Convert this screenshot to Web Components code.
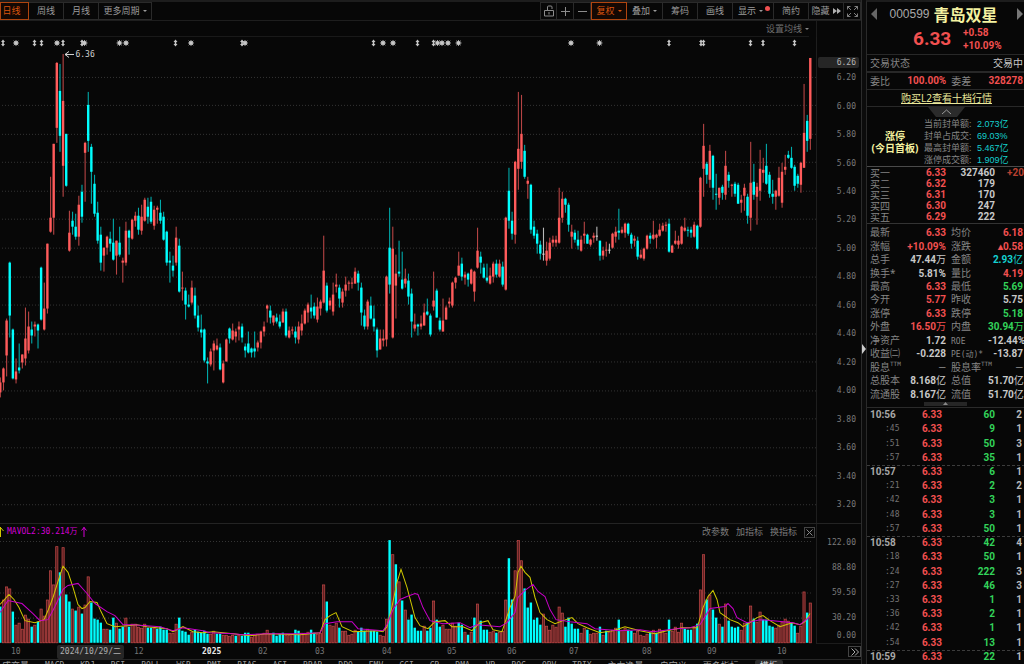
<!DOCTYPE html>
<html lang="zh-CN">
<head>
<meta charset="utf-8">
<title>青岛双星 000599</title>
<style>
body{margin:0;background:#070707;color:#8a8a8a;font:9px/12px "Noto Sans","Noto Sans CJK SC",sans-serif;overflow:hidden}
</style>
</head>
<body>
<stock-terminal></stock-terminal>
<script>
const BASE = `*{box-sizing:border-box}button{font:inherit;color:inherit;background:none;border:0;margin:0;padding:0;white-space:nowrap}
.mono{font:8px/12px "DejaVu Sans Mono","Noto Sans CJK SC",monospace}`;
function define(tag, css, html){
  customElements.define(tag, class extends HTMLElement{
    constructor(){
      super();
      this.attachShadow({mode:'open'}).innerHTML = `<style>${BASE}${css}</style>${typeof html === 'function' ? html() : html}`;
    }
  });
}

/* Daily candles: direction (r up, c down, w flat), high, body top, body bottom, low, volume (negative: cyan bar) */
const CANDLES = `r378,383,393,398,-36 r368,369,383,391,43 r319,321,356,377,56 c262,263,316,338,54 c329,330,379,380,-31 r359,372,380,384,18 c344,368,371,374,20 r355,355,363,369,14 r308,339,359,366,28 r312,327,351,354,24 c322,330,336,344,-16 r322,325,327,337,18 c324,325,331,349,-21 c267,268,320,321,34 r283,309,330,331,27 r244,244,309,314,43
r177,218,232,233,72 r144,144,218,235,58 r62,63,128,143,96 c64,91,136,152,-70 r54,101,166,197,95 c134,134,186,187,-48 r211,233,251,252,-41 c212,221,227,235,34 c214,227,237,240,-32 r196,205,237,246,36 c185,192,217,223,-29 r142,143,153,202,38 c92,105,141,152,66 c144,147,172,204,-40 c175,184,214,217,-24 c202,213,241,244,-23 c227,235,263,271,-20 r248,248,256,272,14 r236,237,248,255,14 c232,239,244,252,-13 c219,243,260,261,-25 r241,241,256,275,20 c227,243,255,257,-14 r258,261,263,283,-16 r222,231,263,266,25 c230,231,238,255,-16 r219,220,239,240,19 r212,216,221,227,19 c208,216,230,235,16 r205,217,231,235,15 r198,200,221,222,19
c198,207,217,224,-15 c197,202,222,224,-15 r206,210,226,230,15 r206,208,210,224,-14 c200,213,221,224,-16 c212,217,240,241,-13 c231,232,263,266,-13 c252,261,263,283,10 c256,266,271,277,10 r227,238,263,266,19 c239,246,292,293,-25 r272,288,289,301,-12 c288,291,305,320,-11 c295,305,307,308,-8 r281,288,303,305,11 c288,296,316,319,-13 c306,316,328,332,-11 c315,330,333,338,-10 c329,330,361,363,-12 c358,362,364,384,-9 r349,352,365,367,9 r341,344,351,371,12 r339,346,350,351,-9 c344,348,370,371,-9 r361,364,383,384,8 r339,340,362,362,8 c328,329,339,344,7 r324,331,340,341,8 r329,332,337,343,-7 r322,327,330,341,8 c324,327,338,343,-7 c344,347,351,358,-10 c332,344,353,354,-10 c348,349,353,358,6 c332,349,352,358,8 r341,343,348,352,9 r331,332,343,349,9 r322,327,332,337,10
r305,306,309,323,13 c306,311,318,324,9 r316,316,323,326,-10 c314,318,322,324,-7 c315,322,327,329,-9 r309,312,323,323,-10 c309,312,336,338,8 r327,331,338,339,8 r327,330,331,335,9 c327,332,338,344,-13 r322,327,340,344,-12 r315,324,331,336,10 r309,311,324,325,10 r303,305,313,323,11 c295,308,312,319,-13 c303,307,316,319,-10 r298,307,320,323,9 r300,302,309,316,10 r236,271,303,304,58 c283,286,311,313,-41 r298,301,306,310,18 r283,295,312,316,17 r274,285,287,293,20 c285,288,299,308,-15 r289,292,303,308,12 r277,285,291,297,12 r281,283,284,291,8 r278,283,284,289,9 r268,272,284,284,13 c271,274,283,291,-11 c283,288,313,326,-15 c310,316,327,330,-12 r300,302,327,330,14 c297,306,319,320,-12 c306,319,327,332,-12 c328,330,351,358,-11 r330,339,350,350,8 r330,339,341,347,7 r276,277,340,347,24
c208,248,285,294,-102 r227,249,338,339,88 r255,274,286,319,-78 c241,272,274,277,61 c252,280,289,290,-42 r269,279,284,288,33 c274,281,297,305,-23 c289,294,322,338,-28 r314,325,329,332,-15 c324,325,327,336,-12 r316,324,327,330,-12 r304,313,326,326,17 c299,312,315,316,-12 c314,316,335,337,-15 r272,301,307,311,42 c289,291,318,318,-23 c318,321,330,332,-16 r299,321,332,332,18 r306,308,320,320,14 r298,302,304,308,14 r282,283,306,308,20 r277,278,283,289,17 r252,266,276,276,-20 c258,264,277,281,-18 r272,275,278,285,11 c273,274,280,287,-8 r269,270,284,285,11 r271,272,292,302,-25 r228,251,268,269,39 c252,257,263,274,-22 c264,268,278,279,-13 c264,278,281,283,-13 r268,276,284,285,11 r262,264,277,283,12 c260,264,275,278,-10 r260,264,277,278,11 c262,267,285,287,12 r217,218,290,291,43
c168,191,221,229,-84 c212,221,234,240,-43 r161,162,235,244,72 r92,149,169,190,102 r95,134,162,169,82 c145,151,177,179,-54 r177,181,184,199,-35 c184,185,230,234,-40 c221,227,236,239,-23 c230,234,244,254,-25 c241,245,254,260,-18 w228,254,255,261,29 r242,251,261,266,17 r238,243,259,261,13 r236,240,243,247,18 r236,240,243,247,16 r188,218,243,244,36 r192,199,218,223,30 c198,199,205,213,-16 c203,205,225,232,-25 r225,232,237,249,-19 c230,233,240,243,-14 c231,240,246,250,-14 r236,240,251,252,10 r222,234,236,244,15 c234,235,244,244,-13 r239,240,245,247,9 r233,236,238,243,10 w227,236,237,241,10 c241,241,256,261,-16 r247,251,256,260,8 r242,250,251,257,-12 w244,250,251,254,11 r233,234,248,249,13 r227,232,237,243,15 c209,231,233,240,-23 r227,230,233,234,13 r223,224,233,238,15
c223,224,234,236,-13 c233,235,244,249,-12 r236,239,241,247,10 c237,241,257,260,12 r250,255,258,259,8 r248,249,259,261,7 r235,236,249,250,9 c233,236,239,244,-10 r221,235,239,240,13 r234,235,238,249,-10 r224,230,236,237,14 r223,226,231,232,12 r222,225,226,232,10 c219,224,252,253,-23 r245,246,253,253,12 r231,241,244,245,16 r236,241,245,249,11 r226,227,244,245,20 r218,228,231,232,-14 c227,230,231,237,-13 c227,230,233,238,-13 r222,225,237,238,16 c225,226,249,250,-19 r177,178,227,228,53 r124,146,169,197,88 c162,164,175,184,-43 r145,151,180,188,48 c155,156,188,200,-33 c174,194,195,210,-25 r188,188,198,205,19 c185,187,193,200,-16 r151,166,195,200,39 c172,175,181,188,-22 r184,185,186,197,-16 c182,184,194,197,-15 c183,185,204,204,-16
r195,200,203,213,13 r184,188,196,211,20 c194,197,216,224,-20 r142,183,218,231,37 c164,182,195,200,-24 r183,187,197,225,21 r150,169,191,201,31 r158,170,173,183,-23 c144,166,184,185,-23 c172,175,194,198,-17 c180,194,197,204,-16 r190,191,197,210,15 r167,178,196,197,18 r163,172,203,208,21 r155,167,170,175,24 c151,155,158,159,22 c147,158,168,169,-20 c165,167,186,191,-17 c174,176,184,188,10 r162,163,185,193,17 r84,133,168,168,51 c115,121,141,152,-30 r58,58,139,150,40`
  .trim().split(/\s+/).map(s => [s[0], ...s.slice(1).split(',').map(Number)]);
const barX = i => 0.3 + i * 810 / (CANDLES.length - 1);
const r2 = n => Math.round(n * 100) / 100;
const dotted = (ys, x1, x2) => ys.map(y => `<line x1="${x1}" x2="${x2}" y1="${y}.5" y2="${y}.5" stroke="#343434" stroke-dasharray="1 2"/>`).join('');

function candleSvg(){
  const body = {r:'#ff5b5b', c:'#00ffff', w:'#d8d8d8'}, wick = {r:'#b64444', c:'#00a9a9', w:'#b8b8b8'};
  let s = dotted([77,105,134,162,191,219,248,277,305,334,362,391,419,448,476,505], 2, 817);
  CANDLES.forEach(([d, hi, top, bot, lo], i) => {
    const x = barX(i);
    s += `<rect x="${r2(x-.5)}" y="${hi}" width="1.1" height="${Math.max(1,lo-hi)}" fill="${wick[d]}"/>`;
    s += `<rect x="${r2(x-1.2)}" y="${top}" width="2.4" height="${Math.max(1,bot-top)}" fill="${body[d]}"/>`;
  });
  const star = x => `<g transform="translate(${x} 43)"><circle r="2"/><path d="M-3 0H3M0-3V3M-2.3-2.3L2.3 2.3M2.3-2.3L-2.3 2.3" stroke="#c8c8c8" stroke-width=".8"/></g>`;
  const mark = x => `<path d="M${x} 39.5l2 2.5h-1.2v2h1.2l-2 2.5-2-2.5h1.2v-2h-1.2z"/>`;
  s += `<g fill="#c8c8c8">${[3,34.5,41.5,63,82,175.5,242,373.5,417.5,433.5,669,701,703.5,750.5,763,794.5].map(mark).join('')}${[16,57,84.5,119.5,126,191,245,383,393,437.5,442,448,458.5,571,599.5].map(star).join('')}</g>`;
  s += '<path d="M74 54.5H65M69 51.5L65 54.5L69 57.5" fill="none" stroke="#d8d8d8"/>';
  return s;
}
function volumeSvg(){
  let s = dotted([542,568,593,618], 0, 813);
  CANDLES.forEach((c, i) => {
    const v = c[5], x = barX(i), h = Math.abs(v);
    s += v < 0 ? `<rect x="${r2(x-1.2)}" y="${643-h}" width="2.4" height="${h}" fill="#00ffff"/>`
      : `<rect x="${r2(x-1.1)}" y="${643.5-h}" width="2.2" height="${h-.5}" fill="#5c2020" stroke="#c44848" stroke-width=".7"/>`;
  });
  const line = (c, p) => `<polyline fill="none" stroke="${c}" points="${p}"/>`;
  s += line('#d0c800','0,605 9,595 14,600 19,608 25,621 35,623 44,620 48,611 53,598 58,582 63,567 68,573 73,588 78,605 82,609 85,608 90,602 97,603 101,612 107,624 115,627 127,626 137,625 147,627 167,629 173,632 183,627 193,632 203,633 213,632 233,634 250,636 267,634 300,635 320,633 325,620 330,616 336,613 342,627 353,632 377,631 383,632 387,627 392,607 397,583 401,570 407,588 415,618 420,626 428,629 435,622 445,621 452,627 463,627 472,631 480,623 488,621 493,630 502,632 505,623 510,608 515,597 518,573 521,567 525,573 530,578 535,598 540,613 547,620 555,624 563,621 572,618 578,624 587,628 600,633 613,631 625,627 640,631 655,634 667,631 682,628 697,628 699,622 703,608 708,597 713,591 717,600 720,613 730,620 738,623 743,627 750,623 757,618 763,616 770,621 780,627 792,623 800,625 805,622 810,614');
  s += line('#c800c8','0,613 8,601 22,604 33,614 40,621 48,620 55,607 63,590 68,586 78,584 87,594 95,604 107,612 115,616 123,625 133,625 160,627 173,631 183,628 203,631 210,633 233,634 243,635 267,634 300,634 320,633 325,624 337,622 352,622 358,629 383,631 387,625 393,610 400,600 407,597 415,594 418,595 423,608 430,621 443,624 460,623 470,628 477,625 500,627 507,623 515,613 518,598 525,591 533,585 538,592 545,597 550,610 556,620 570,622 587,624 595,629 620,631 640,630 653,632 677,629 690,628 700,625 705,617 710,609 725,607 728,604 733,609 737,618 747,623 760,620 773,621 793,623 800,625 810,617');
  return s;
}

define('stock-terminal', `:host{display:flex;height:100vh;min-height:600px;background:#070707}
main{flex:1;min-width:0;display:flex;flex-direction:column}
.split{width:5px;background:#0c0c0c;border-left:1px solid #2c2c2c;display:flex;flex-direction:column;align-items:center;justify-content:center;padding-top:34px;color:#aaa}
quote-panel{flex:0 0 158px}`,
`<main><top-bar></top-bar><average-bar></average-bar><price-chart></price-chart><volume-chart></volume-chart><date-axis></date-axis><indicator-tabs></indicator-tabs></main>
<div class="split"><svg width="4" height="12"><path d="M0 1L4 6L0 11z" fill="#ccc"/></svg></div><quote-panel></quote-panel>`);

define('top-bar', `:host{display:flex;justify-content:space-between;height:21px;border-top:2px solid #1d1d1d;border-bottom:1px solid #1e1e1e}
div{display:flex}
button{height:18px;border:1px solid #2a2a2a;border-left-width:0;display:flex;align-items:center;justify-content:center;gap:3px;color:#9a9a9a;position:relative}
.on{border:1px solid #b0450f;color:#d9540e;background:#140803}
.first{padding-right:6px}
.w17{width:17px}.w29{width:29px}.w35{width:35px}.w36{width:36px}.w41{width:41px}.w53{width:53px}
.menu{justify-content:flex-start;padding-left:5px}
.lock{border-left-width:1px}
i{border:2px solid transparent;border-top-color:currentColor;border-bottom:0}
b{position:absolute;right:3px;top:3px;width:5px;height:5px;border-radius:50%;background:#f05050}
svg{fill:none;stroke:#8c8c8c}`,
`<div><button class="on w29 first">日线</button><button class="w35">周线</button><button class="w35">月线</button><button class="w53">更多周期<i></i></button></div>
<div><button class="w17 lock" aria-label="锁定"><svg width="12" height="12"><path d="M1.5 5.5h9v5.500h-9zM4.500 5.500V2a1 1 0 0 1 1-1h2.500a1 1 0 0 1 1 1V4M6 7v2.500"/></svg></button><button class="w17" aria-label="放大"><svg width="9" height="9"><path d="M0 4.5H9M4.5 0V9"/></svg></button><button class="w17" aria-label="缩小"><svg width="9" height="9"><path d="M0 4.5H9"/></svg></button><button class="on w36">复权<i></i></button><button class="w36">叠加<i></i></button><button class="w35">筹码</button><button class="w35">画线</button><button class="w41 menu">显示<i></i><b></b></button><button class="w35">简约</button><button class="w35">隐藏<svg width="8" height="6"><path d="M0 0L4 3L0 6zM4 0L8 3L4 6z" fill="#b0b0b0" stroke="none"/></svg></button><button class="w17" aria-label="全屏"><svg width="11" height="11"><path d="M.5 3.5v-3h3M7.5.5h3v3M10.5 7.5v3h-3M3.5 10.5h-3v-3M.5.5L4 4M10.5.5L7 4M10.5 10.5L7 7M.5 10.5L4 7" stroke-width=".9"/></svg></button></div>`);

define('average-bar', `:host{display:flex;justify-content:flex-end;height:16px;margin-right:44px;padding-right:7px;position:relative;border-right:1px solid #1c1c1c}
:host::after{content:"";position:absolute;left:0;right:7px;bottom:0;height:1px;background:#191919}
button{display:flex;align-items:center;gap:3px;color:#6f6f6f}i{border:2px solid transparent;border-top-color:#888;border-bottom:0}`,
`<button>设置均线<i></i></button>`);

define('price-chart', `:host{display:grid;grid-template-columns:minmax(0,1fr) 44px;grid-template-rows:minmax(0,1fr);flex:487 1 0;min-height:0}
.plot{position:relative;border-right:1px solid #1e1e1e}
.plot svg{display:block;width:100%;height:100%}
.peak{position:absolute;left:9%;top:12px;color:#d0d0d0;padding-left:2px}
.axis{display:grid;grid-auto-rows:minmax(0,1fr);align-items:center;justify-items:end;padding:27px 5px 4px 0;position:relative;color:#7a7a7a}
.now{position:absolute;top:20px;left:1px;right:2px;height:11px;line-height:12px;text-align:right;padding-right:3px;background:#262626;border-radius:2px;color:#b4b4b4}`,
() => `<div class="plot"><svg viewBox="0 37 816 487" preserveAspectRatio="none">${candleSvg()}</svg><span class="mono peak">6.36</span></div>
<div class="axis mono">${Array.from({length:16}, (_, i) => `<span>${(6.2 - i * .2).toFixed(2)}</span>`).join('')}<span class="now">6.26</span></div>`);

define('volume-chart', `:host{display:grid;grid-template-columns:minmax(0,1fr) 44px;grid-template-rows:minmax(0,1fr);flex:120 1 0;min-height:0;border-top:1px solid #232323}
.plot{position:relative;border-right:1px solid #1e1e1e}
.plot svg.v{display:block;width:100%;height:100%}
.head{position:absolute;inset:2px 1px auto 0;display:flex;align-items:center;justify-content:space-between;height:12px;color:#7c7c7c}
.head div{display:flex;align-items:center;gap:7px}
.head .legend{gap:3px}
.ma{color:#d400d4}
.x{width:11px;height:11px;border:1px solid #444;display:flex;align-items:center;justify-content:center}
.axis{display:grid;grid-template-rows:repeat(4,25px) 12px;align-items:center;justify-items:end;padding:6px 5px 0 0;color:#7a7a7a;border-bottom:1px solid #1c1c1c}`,
() => `<div class="plot"><svg class="v" viewBox="0 525 816 119" preserveAspectRatio="none">${volumeSvg()}</svg>
<div class="head"><div class="legend"><svg width="4" height="10"><path d="M.5 0V10M.5 .5L3.500 4" stroke="#d0c800" fill="none"/></svg><span class="mono ma">MAVOL2:30.214万</span><svg width="6" height="10"><path d="M3 0V10M.5 3.500L3 .5L5.500 3.500" stroke="#d400d4" fill="none"/></svg></div>
<div><button>改参数</button><button>加指标</button><button>换指标</button><button class="x" aria-label="关闭"><svg width="7" height="7"><path d="M.5.5L6.500 6.500M6.500.5L.5 6.500" stroke="#888"/></svg></button></div></div></div>
<div class="axis mono"><span>122.00</span><span>88.80</span><span>59.50</span><span>30.20</span><span>0.00</span></div>`);

define('date-axis', `:host{display:grid;flex:0 0 16px;grid-template-columns:${[11,46,67,10,68,56,57,67,65,60,62,73,65,70,71,13].map(n => `minmax(0,${n}fr)`).join(' ')};align-items:center;border-bottom:1px solid #262626;color:#757575;white-space:nowrap}
.mono{line-height:14px}
.hot{background:#262626;color:#b0b0b0;text-align:center;border-radius:2px;grid-column:3}
.ten{grid-column:2}.twelve{grid-column:5}
.year{color:#e8e8e8;font-weight:bold}
button{border:1px solid #444;height:11px;display:flex;align-items:center;justify-content:center;grid-column:16}`,
`<span class="mono ten">10</span><span class="mono hot">2024/10/29/二</span><span class="mono twelve">12</span><span class="mono year">2025</span>${['02','03','04','05','06','07','08','09','10'].map(t => `<span class="mono">${t}</span>`).join('')}<button aria-label="更多"><svg width="8" height="8" fill="none" stroke="#aaa"><path d="M.5 .5L4 4L.5 7.500M4 .5L7.500 4L4 7.500"/></svg></button>`);

define('indicator-tabs', `:host{display:flex;align-items:flex-start;flex:0 0 4px;height:4px;overflow:hidden;color:#9a9a9a;padding-left:2px;gap:16px}
button{height:12px;line-height:12px;flex:none}.on{background:#2c2c2c;padding:0 5px;color:#ddd;border-radius:2px}`,
`<button>成交量</button>${['MACD','KDJ','RSI','BOLL','W&R','DMI','BIAS','ASI','BRAR','DPO','EMV','CCI','CR','DMA','VR','ROC','OBV','TRIX'].map(t => `<button class="mono">${t.replace('&','&amp;')}</button>`).join('')}<button>主力净量</button><button>自定义</button><button>更多指标</button><button class="on">模板</button>`);

define('quote-panel', `:host{display:flex;flex-direction:column;border-left:1px solid #2a2a2a;border-top:2px solid #1d1d1d;font-size:10px;line-height:12px;color:#858585;min-width:0}
.num,td,.big,.chg{font-family:Roboto,"Noto Sans CJK SC",sans-serif;font-weight:700}
.r{color:#f25050}.g{color:#33d35a}.w{color:#c8c8c8}.cy{color:#14d0d0}
header{height:53px;flex:none;display:grid;grid-template-columns:7px 1fr 7px;grid-template-rows:24px 1fr;align-items:center;padding:0 0 3px 4px;border-bottom:1px solid #282828}
header button{display:flex}
h1{margin:0;font:bold 16px/22px "Noto Sans CJK SC",sans-serif;color:#f4f2a0;display:flex;align-items:center;justify-content:center;gap:4px;padding-right:8px;white-space:nowrap}
h1 span{font:12px/22px "Liberation Sans",sans-serif;color:#a8a8a8}
.price{grid-column:1/4;display:grid;grid-template-columns:38px 1fr;gap:12px;padding-left:42px;align-items:center}
.big{font-size:19px;line-height:20px}.chg{line-height:13px}
.row{display:flex;align-items:center;flex:none;height:17px;padding:0 1px 0 3px;border-bottom:1px solid #282828}
.row.state{height:18px;justify-content:space-between;border-bottom-width:2px}
.row .num:nth-child(2){margin:0 5px 0 auto}.row .num:nth-child(4){margin-left:auto}
.row a{margin:auto;color:#eae89a}
.limit{flex:none;height:60px;display:grid;grid-template-columns:54px 1fr;align-items:center;padding-top:10px;border-bottom:1px solid #4a4a4a;position:relative}
.limit strong{color:#f4f2a0;text-align:center;white-space:nowrap;padding-left:2px}
.limit dl{margin:0;display:grid;grid-template-columns:48px 1fr;column-gap:5px;font-size:9px;line-height:12px;padding-left:3px;white-space:nowrap}
.limit dd{margin:0;font-family:"Liberation Sans","Noto Sans CJK SC",sans-serif}
.fold{position:absolute;top:0;left:61px;display:flex}
table{border-collapse:collapse;table-layout:fixed;width:157px;flex:none}
td,th{padding:0;line-height:11px;white-space:nowrap}th{font-weight:400;text-align:left}td{text-align:right}
.bids{height:57px;border-bottom:1px solid #333}.bids th{padding-left:3px}.bids td:last-child{color:#b84030}
.bids th,.bids td{line-height:10px}
.stats{height:175px;margin-top:2px}.stats th{padding-left:3px}.stats td:last-child{padding-right:1px}.stats th:nth-child(3){padding-left:5px}
.stats .mono{line-height:8px}
.c30{width:30px}.c49{width:49px}.c36{width:36px}.c43{width:43px}.c42{width:42px}
em{font-style:normal;font-weight:400}sup{font:6px/0 "DejaVu Sans Mono",monospace;vertical-align:5px}
.grip{flex:none;height:7px;padding-top:1px;display:flex;justify-content:center;border-bottom:1px solid #2a2a2a}
.grip svg{display:block}tick-list{flex:1;min-height:0}`,
() => {
  const bids = [['一','6.33','327460','+20'],['二','6.32','179',''],['三','6.31','170',''],['四','6.30','247',''],['五','6.29','222','']];
  const stats = [['最新','6.33','r','均价','6.18','r'],['涨幅','+10.09%','r','涨跌','▴0.58','r'],['总手','47.44万','w','金额','2.93亿','cy'],['换手*','5.81%','w','量比','4.19','r'],['最高','6.33','r','最低','5.69','g'],['今开','5.77','r','昨收','5.75','w'],['涨停','6.33','r','跌停','5.18','g'],['外盘','16.50万','r','内盘','30.94万','g'],['净资产','1.72','w','<span class="mono">ROE</span>','-12.44%','w'],['收益㈡','-0.228','w','<span class="mono">PE(动)*</span>','-13.87','w'],['股息<sup>TTM</sup>','—','','股息率<sup>TTM</sup>','—',''],['总股本','8.168亿','w','总值','51.70亿','w'],['流通股','8.167亿','w','流值','51.70亿','w']];
  const unit = s => s.replace(/[万亿—]/, m => `<em>${m}</em>`);
  return `<header><button aria-label="上一只"><svg width="6" height="12"><path d="M6 0V12L0 6z" fill="#666"/></svg></button><h1><span>000599</span>青岛双星</h1><button aria-label="下一只"><svg width="6" height="12"><path d="M0 0V12L6 6z" fill="#777"/></svg></button>
<div class="price r"><span class="big">6.33</span><span class="chg">+0.58<br>+10.09%</span></div></header>
<div class="row state"><span>交易状态</span><span class="w">交易中</span></div>
<div class="row"><span>委比</span><span class="num r">100.00%</span><span>委差</span><span class="num r">328278</span></div>
<div class="row"><a href="#level2">购买L2查看十档行情</a></div>
<section class="limit"><button class="fold" aria-label="收起"><svg width="37" height="10"><path d="M0 0H37L29 10H8z" fill="#2b2b2b"/><path d="M14 7L18.500 3L23 7" fill="none" stroke="#999"/></svg></button>
<strong>涨停<br>(今日首板)</strong><dl><dt>当前封单额:</dt><dd class="cy">2.073亿</dd><dt>封单占成交:</dt><dd class="cy">69.03%</dd><dt>最高封单额:</dt><dd class="cy">5.467亿</dd><dt>涨停成交额:</dt><dd class="cy">1.909亿</dd></dl></section>
<table class="bids"><colgroup><col class="c30"><col class="c49"><col class="c49"><col></colgroup>${bids.map(b => `<tr><th>买${b[0]}</th><td class="r">${b[1]}</td><td class="w">${b[2]}</td><td>${b[3]}</td></tr>`).join('')}</table>
<table class="stats"><colgroup><col class="c36"><col class="c43"><col class="c42"><col></colgroup>${stats.map(s => `<tr><th>${s[0]}</th><td class="${s[2]}">${unit(s[1])}</td><th>${s[3]}</th><td class="${s[5]}">${unit(s[4])}</td></tr>`).join('')}</table>
<div class="grip"><svg width="43" height="4"><rect width="43" height="4" fill="#262626"/><path d="M19 3L21.500 0L24 3z" fill="#888"/></svg></div><tick-list></tick-list>`;
});

define('tick-list', `:host{display:block}
table{width:157px;height:100%;border-collapse:collapse;table-layout:fixed}
td,th{padding:0;text-align:right;font:700 10px/12px Roboto,sans-serif}
th{text-align:left;padding-left:3px;color:#a8a8a8}
th.sec{font:8px/12px "DejaVu Sans Mono",monospace;padding-left:18px;color:#757575}
.p{color:#f25050}.v{color:#33d35a}.n{color:#b8b8b8;padding-right:2px}
.c35{width:35px}.c40{width:40px}.c53{width:53px}
tr.min:not(:first-child){background:linear-gradient(90deg,#3c3c3c 60%,transparent 0) 0 0/5px 1px repeat-x}`,
() => `<table><colgroup><col class="c35"><col class="c40"><col class="c53"><col></colgroup>${
[['10:56',60,2],[':45',9,1],[':51',50,3],[':57',35,1],['10:57',6,1],[':21',2,2],[':42',3,1],[':48',3,1],[':57',50,1],['10:58',42,4],[':18',50,1],[':24',222,3],[':27',46,3],[':33',1,1],[':36',2,1],[':42',1,1],[':54',13,1],['10:59',22,1]]
.map(([t, v, n]) => `<tr class="${t[0] === ':' ? '' : 'min'}"><th class="${t[0] === ':' ? 'sec' : ''}">${t}</th><td class="p">6.33</td><td class="v">${v}</td><td class="n">${n}</td></tr>`).join('')}</table>`);
</script>
</body>
</html>
